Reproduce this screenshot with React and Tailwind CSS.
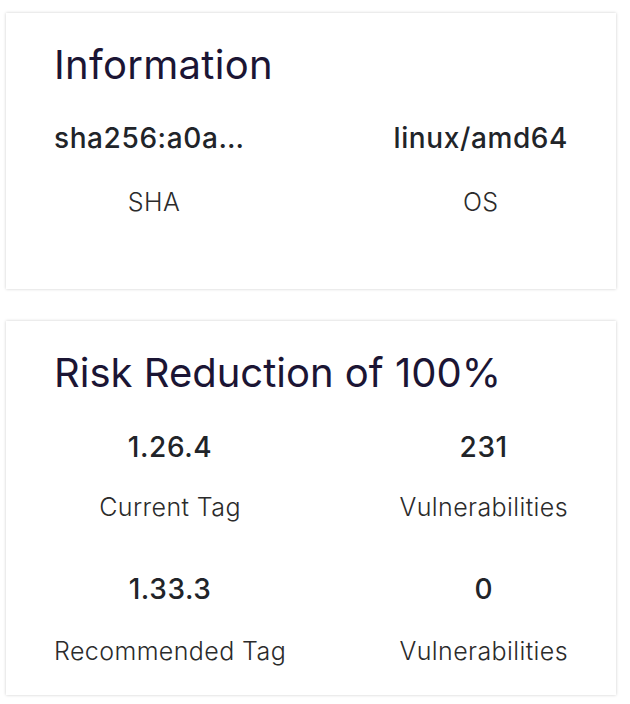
import React from "react";

const font = { fontFamily: "Inter, 'Noto Sans', sans-serif" };

const valueCls = "text-[28px] leading-[34px] font-medium tracking-[0.6px] text-[#212429]";
const labelCls = "text-[25px] leading-[30px] font-light tracking-[0.4px] text-[#2b2b2b]";

function Stat({ value, label, truncate }) {
  return (
    <div className={truncate ? "flex w-[200px] flex-col items-center" : "flex flex-col items-center"}>
      <div className={valueCls + (truncate ? " w-full truncate text-left" : "")}>{value}</div>
      <div className={"mt-[32px] " + labelCls}>{label}</div>
    </div>
  );
}

export default function App() {
  return (
    <div className="w-[630px] min-h-[704px] bg-white pt-[13px] pl-[6px] pr-[14px]" style={font}>
      <div className="h-[276px] bg-white px-[48px] pt-[28px] shadow-[0_0_3px_rgba(0,0,0,0.2)]">
        <h2 className="text-[40px] leading-[48px] font-normal tracking-[0.3px] text-[#1b1534]">Information</h2>
        <div className="mt-[32px] flex justify-between">
          <Stat value="sha256:a0a…" label="SHA" truncate />
          <Stat value="linux/amd64" label="OS" />
        </div>
      </div>

      <div className="mt-[32px] h-[374px] bg-white px-[48px] pt-[28px] shadow-[0_0_3px_rgba(0,0,0,0.2)]">
        <h2 className="text-[40px] leading-[48px] font-normal text-[#1b1534]">Risk Reduction of 100%</h2>
        <div className="mt-[33px] flex justify-between">
          <div className="flex flex-col items-center">
            <div className={valueCls}>1.26.4</div>
            <div className={"mt-[28px] " + labelCls}>Current Tag</div>
            <div className={"mt-[50px] " + valueCls}>1.33.3</div>
            <div className={"mt-[30px] " + labelCls}>Recommended Tag</div>
          </div>
          <div className="flex flex-col items-center">
            <div className={valueCls}>231</div>
            <div className={"mt-[28px] " + labelCls}>Vulnerabilities</div>
            <div className={"mt-[50px] " + valueCls}>0</div>
            <div className={"mt-[30px] " + labelCls}>Vulnerabilities</div>
          </div>
        </div>
      </div>
    </div>
  );
}
